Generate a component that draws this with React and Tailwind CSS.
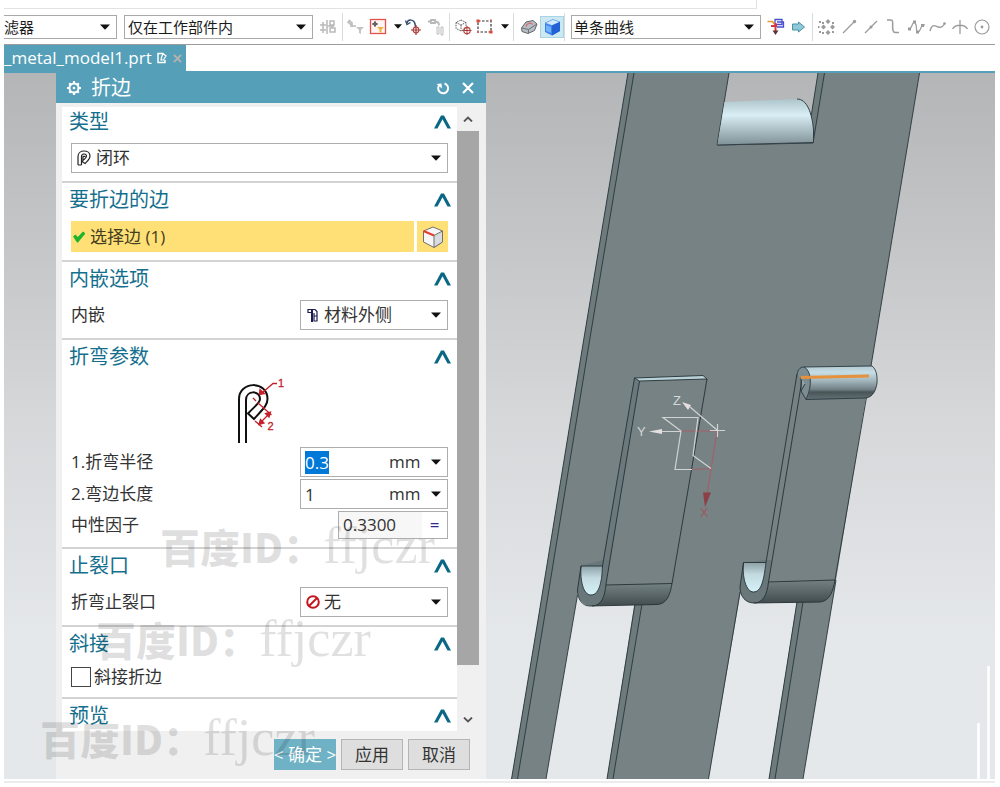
import React from "react";

const Caret = ({ className = "" }) => (
  <svg viewBox="0 0 10 6" className={`pointer-events-none h-[6px] w-[10px] shrink-0 ${className}`} aria-hidden="true">
    <path d="M0 0.5H10L5 5.7Z" fill="#111" />
  </svg>
);

const Separator = () => <span className="h-7 w-px shrink-0 bg-[#d9dbdc]" />;

function ToolButton({ label, wide, active, children }) {
  return (
    <button
      type="button"
      aria-label={label}
      className={`flex h-[22px] shrink-0 items-center justify-center ${wide ? "w-6" : "w-[22px]"} ${
        active ? "border border-[#a8d5e5] bg-[#cde8f1]" : ""
      }`}
    >
      <svg viewBox="0 0 20 20" className="h-5 w-5" fill="none">
        {children}
      </svg>
    </button>
  );
}

const MenuButton = ({ label }) => (
  <button type="button" aria-label={label} className="flex h-[22px] w-[10px] shrink-0 items-center justify-center">
    <svg viewBox="0 0 8 5" className="h-[5px] w-2">
      <path d="M0 .3H8L4 4.700Z" fill="#111" />
    </svg>
  </button>
);

function ToolSelect({ label, value, className, inset }) {
  return (
    <div className={`relative flex h-6 shrink-0 items-center border-[#a9a9a9] bg-white ${className}`}>
      <select
        aria-label={label}
        className={`h-full w-full appearance-none bg-transparent text-[15px] leading-[22px] text-[#1b1b1b] outline-none ${inset}`}
      >
        <option>{value}</option>
      </select>
      <Caret className="absolute right-[6px]" />
    </div>
  );
}

function Toolbar() {
  return (
    <div className="flex h-9 shrink-0 items-center border-b border-[#9c9c9c]">
      <ToolSelect label="过滤器" value="滤器" className="w-[113px] border-y border-r" inset="pl-0" />
      <ToolSelect label="选择范围" value="仅在工作部件内" className="ml-[7px] w-[189px] border" inset="pl-[3px]" />
      <div className="ml-1 mr-[3px] flex">
        <ToolButton label="装配范围">
          <g stroke="#b9b9b9" strokeWidth="1.500">
            <path d="M5 5v11M2 8h6M2 13h6M9 3v14M12 4h4v4h-4zM12 11h5v4h-5zM9 9h7M14 8v3" />
          </g>
        </ToolButton>
      </div>
      <Separator />
      <div className="mx-[2px] flex items-center">
        <ToolButton label="重置过滤器">
          <path d="M6 7.500C3 7.500 3 5 3 4M1.500 6l2-2.500L5.500 5.500M6 5v5M4 9h6" stroke="#bdbdbd" strokeWidth="1.600" />
          <path d="M10 10h8l-3 3v4l-2-1v-3z" fill="#c4c4c4" />
        </ToolButton>
        <ToolButton label="常规选择过滤器">
          <rect x="2.500" y="2.500" width="15" height="14" fill="#fff6f4" stroke="#e0524b" strokeWidth="1.300" />
          <path d="M7 4v6M4 7h6" stroke="#444" />
          <circle cx="7" cy="7" r="1.500" stroke="#444" strokeWidth=".8" />
          <path d="M9 10h7l-2.500 2.500V16l-2-1v-2.500z" fill="#efb23c" />
        </ToolButton>
        <span className="w-1" />
        <MenuButton label="过滤器选项" />
        <ToolButton label="恢复选择">
          <path d="M3 6c1-4 7-4 8 1l.5 3" stroke="#334a6e" strokeWidth="1.500" />
          <path d="M1.500 3.500L3 7.500l3.500-2" stroke="#334a6e" strokeWidth="1.300" />
          <path d="M12 8v10M7 13h10" stroke="#9e3434" strokeWidth="1.200" />
          <circle cx="12" cy="13" r="2.800" stroke="#b84141" strokeWidth="1.200" />
        </ToolButton>
        <ToolButton label="选择链">
          <path d="M2 4.500h3M5 3h4v3H5zM9 4.500c3 0 4 1 4 4" stroke="#b8b8b8" strokeWidth="1.800" />
          <path d="M11 10h2v7h-2zM15 10h2v8h-2z" stroke="#bdbdbd" />
        </ToolButton>
      </div>
      <Separator />
      <div className="mx-[2px] flex items-center">
        <ToolButton label="选择组件">
          <path d="M8 3l5 2.500v6L8 14l-5-2.500v-6zM3 5.500L8 8l5-2.500M8 8v6" stroke="#555" strokeWidth="1" strokeDasharray="1.500 1" />
          <path d="M14 9v9M9.500 13.500h9" stroke="#a73939" />
          <circle cx="14" cy="13.500" r="3.200" stroke="#b84141" strokeWidth="1.200" />
        </ToolButton>
        <ToolButton label="矩形选择">
          <rect x="3" y="4" width="13" height="11" stroke="#333" strokeWidth="1.200" strokeDasharray="2.500 1.500" />
          <path d="M1.500 2.500h3v3h-3zM14.500 13.500h3v3h-3z" fill="#e0453a" />
          <path d="M15 2.500h2v2h-2zM2 14h2v2H2z" fill="#c46a6a" />
        </ToolButton>
        <span className="w-1" />
        <MenuButton label="选择方式" />
        <span className="w-px" />
      </div>
      <Separator />
      <div className="ml-1 flex items-center">
        <ToolButton label="高亮隐藏边">
          <path d="M2.500 11L7 5l7-1.500 4 3.500-2.500 6.500L9 16.500l-6-2z" fill="#b9bdc4" stroke="#60656c" />
          <path d="M3 11l6.500 1.500L18 7M9.500 12.500V16" stroke="#6d7278" />
          <path d="M7 9.500c1-4 5-4 6.500-2" stroke="#d6676a" strokeWidth="1.200" />
        </ToolButton>
        <ToolButton label="着色" wide active>
          <path d="M3 6l8-3.500L18 5v9l-8 4.500L3 15z" fill="#3a82ea" />
          <path d="M3 6l8-3.500L18 5l-8 3.500z" fill="#d3e9fd" stroke="#4c92ee" strokeWidth=".6" />
          <path d="M10 8.500L18 5v9l-8 4.500z" fill="#2360d3" />
          <path d="M4 8l5 2v6l-5-2z" fill="#72b3fa" />
        </ToolButton>
      </div>
      <Separator />
      <ToolSelect label="曲线规则" value="单条曲线" className="ml-[6px] w-[190px] border" inset="pl-[2px]" />
      <div className="ml-1 mr-[3px] flex">
        <ToolButton label="在相交处停止">
          <path d="M9 2.500h7v5H9zM11 5h6.500v5H11" stroke="#4a4fd0" strokeWidth="1.300" />
          <path d="M1.500 4.500h5l3 4" stroke="#ef9b34" strokeWidth="1.700" />
          <path d="M5 9h6M9.500 6v9" stroke="#d6393b" strokeWidth="2" />
          <path d="M6.500 13.500h6L9.500 18z" fill="#5c3538" />
        </ToolButton>
        <ToolButton label="跟随圆角">
          <path d="M4.500 7h6V5l6 5-6 5v-2h-6z" fill="#8dc9d8" stroke="#4b91a5" />
        </ToolButton>
      </div>
      <Separator />
      <div className="ml-[3px] flex min-w-0 flex-1 justify-between pr-0.5 text-[#9b9b9b]">
        <ToolButton label="启用捕捉点">
          <g fill="currentColor">
            <path d="M11 2l2.500 2.500L11 7 8.500 4.500zM6.500 7.500L9 10l-2.500 2.500L4 10zM15.500 7.500L18 10l-2.500 2.500L13 10zM11 13l2.500 2.500L11 18l-2.500-2.500z" />
            <path d="M2 4h2v2H2zM5 5h2v2H5zM15 5h2v2h-2zM2 14h2v2H2zM5 15h2v2H5zM15 14h2v2h-2zM1 9h1.500v2H1z" />
          </g>
        </ToolButton>
        <ToolButton label="端点">
          <path d="M4 16L15 5" stroke="currentColor" strokeWidth="1.200" />
          <circle cx="15.500" cy="4.500" r="1.700" fill="currentColor" />
        </ToolButton>
        <ToolButton label="中点">
          <path d="M4 16L16 4" stroke="currentColor" strokeWidth="1.200" />
          <circle cx="10" cy="10" r="1.500" fill="currentColor" />
        </ToolButton>
        <ToolButton label="控制点">
          <path d="M4 3h4c4 0-1 12 4 12.500h4" stroke="currentColor" strokeWidth="1.500" />
        </ToolButton>
        <ToolButton label="极点">
          <path d="M2 12c4 2 4-9 7-6s0 9 3 9 2-8 7-7" stroke="currentColor" strokeWidth="1.200" />
          <path d="M2 10.500h3v3H2zM7 3.500h3v3H7zM10 13.500h3v3h-3zM15 7h3v3h-3z" fill="currentColor" />
        </ToolButton>
        <ToolButton label="曲线上的点">
          <path d="M2 14c2-8 5-5 8-4s5 0 7-4" stroke="currentColor" strokeWidth="1.400" />
          <circle cx="16.500" cy="6.500" r="1.300" fill="currentColor" />
        </ToolButton>
        <ToolButton label="交点">
          <path d="M10 3v14M2.500 12c3-5 12-5 15 0" stroke="currentColor" strokeWidth="1.300" />
        </ToolButton>
        <ToolButton label="圆心">
          <circle cx="10" cy="10" r="7" stroke="currentColor" strokeWidth="1.200" />
          <circle cx="10" cy="10" r="1.400" fill="currentColor" />
        </ToolButton>
      </div>
    </div>
  );
}

function TabRow() {
  return (
    <div className="flex h-7 shrink-0 border-b-2 border-[#559fb8]">
      <div className="flex w-[182px] items-center bg-[#559fb8] text-white">
        <span className="text-[17px] leading-6">_metal_model1.prt</span>
        <svg viewBox="0 0 12 12" className="ml-1 h-3 w-3" fill="none" aria-hidden="true">
          <path d="M7 1.500H2v9h7V8" stroke="#fff" strokeWidth="1.500" />
          <path d="M7 1.500l3 2.500-2.500 4L5 8l.5-2.500z" stroke="#fff" strokeWidth="1.200" />
        </svg>
        <button type="button" aria-label="关闭标签" className="ml-1 flex h-4 w-3 items-center justify-center">
          <svg viewBox="0 0 10 10" className="h-[9px] w-[9px]" fill="none">
            <path d="M1 1l8 8M9 1L1 9" stroke="#b9b3ae" strokeWidth="2" />
          </svg>
        </button>
      </div>
    </div>
  );
}

function Section({ title, children, className = "pt-[2px] pb-2 border-b-2" }) {
  return (
    <section className={`border-[#d3d3d3] ${className}`}>
      <div className="flex h-[30px] items-center justify-between pl-[7px] pr-[6px]">
        <h2 className="text-[20px] leading-[30px] text-[#146f8e]">{title}</h2>
        <button type="button" aria-label={`折叠 ${title}`} className="flex h-5 w-[17px] items-center justify-center">
          <svg viewBox="0 0 17 14" className="h-[14px] w-[17px]">
            <path d="M0 13.500L7 0.500H10L17 13.500H13.500L8.500 4.200L3.500 13.500Z" fill="#0b6885" />
          </svg>
        </button>
      </div>
      {children}
    </section>
  );
}

function IconSelect({ id, label, value, icon, className, inset }) {
  return (
    <div className={`relative flex h-[30px] items-center border border-[#adadad] bg-white ${className}`}>
      <span className="pointer-events-none absolute left-[5px]">{icon}</span>
      <select
        id={id}
        aria-label={label}
        className={`h-full w-full appearance-none bg-transparent text-[17px] leading-7 text-[#333] outline-none ${inset}`}
      >
        <option>{value}</option>
      </select>
      <Caret className="absolute right-[6px]" />
    </div>
  );
}

const Row = ({ id, label, children }) => (
  <div className="flex items-center justify-between px-[9px]">
    <label htmlFor={id} className="text-[17px] leading-6 text-[#333]">
      {label}
    </label>
    {children}
  </div>
);

function LengthField({ id, value, selected }) {
  return (
    <div className="flex h-[30px] w-[148px] items-center border border-[#adadad] bg-white pl-1 pr-[6px] text-[17px] text-[#333]">
      <div className="min-w-0 flex-1">
        <input
          id={id}
          defaultValue={value}
          className={
            selected
              ? "block h-[23px] w-6 bg-[#0078d7] leading-[23px] text-white outline-none"
              : "block h-[23px] w-16 bg-transparent leading-[23px] outline-none"
          }
        />
      </div>
      <div className="relative flex items-center">
        <select aria-label="单位" className="w-[52px] appearance-none bg-transparent leading-6 outline-none">
          <option>mm</option>
        </select>
        <Caret className="absolute right-0" />
      </div>
    </div>
  );
}

const HemDiagram = () => (
  <svg viewBox="232 374 60 71" className="ml-[170px] mt-[2px] h-[71px] w-[60px]" fill="none" aria-hidden="true">
    <g stroke="#111" strokeWidth="2">
      <path d="M239 443V399C239 381 267.500 380 267.500 399C267.500 405 264 408 254 419L248 413.500C256 405 260 403 260 399C260 390 246 390 246 400V443" />
    </g>
    <g stroke="#c4202b" strokeWidth="1.300">
      <path d="M277 383.500h-4L262 393M253 398l3 3M257.500 402.500l14 12.500M255 421l7 6M270 413l-11 11" />
      <path d="M260 389.500l-.5 5 5-1zM270.500 412l-5 1.500 3.500 3.500zM259 424.500l1.500-5 3.500 3.500z" fill="#c4202b" />
    </g>
    <g className="font-['Liberation_Sans',sans-serif] text-[11px]" fill="#c4202b" stroke="#c4202b" strokeWidth=".3">
      <text x="278" y="387">1</text>
      <text x="267.500" y="430">2</text>
    </g>
  </svg>
);

const ClosedLoopIcon = () => (
  <svg viewBox="0 0 14 16" className="h-4 w-[14px]" fill="none" stroke="#222" strokeWidth="1.200">
    <path d="M1 15V6.500C1 -1 13 -.5 13 6c0 3-2 4.500-5 7.500L5 11.500C8 8.500 9.500 8 9.500 6 9.500 3 4.500 3.500 4.500 6.500V15M1 15h3.500M6 10V7c0-1 2-1 2 0" />
  </svg>
);

const MaterialOutsideIcon = () => (
  <svg viewBox="0 0 14 16" className="h-4 w-[14px]" fill="none" stroke="#1c1c50">
    <path d="M2 2.500h4v3H2z" strokeWidth="1.200" />
    <path d="M6 2v13" strokeWidth="2" />
    <path d="M6 2.500h3l2 2V14H8V6M8 9h3" strokeWidth="1.200" />
  </svg>
);

const NoneIcon = () => (
  <svg viewBox="0 0 14 14" className="h-[14px] w-[14px]" fill="none" stroke="#c4161d" strokeWidth="2">
    <circle cx="7" cy="7" r="5.800" />
    <path d="M3 11L11 3" />
  </svg>
);

function HemDialog() {
  return (
    <form className="flex w-[430px] shrink-0 flex-col bg-[#f0f0f0]" onSubmit={(e) => e.preventDefault()}>
      <header className="flex h-[30px] items-center bg-[#559fb8] pl-2.5 pr-3 text-white">
        <svg viewBox="0 0 16 16" className="h-4 w-4" fill="none" stroke="#fff" aria-hidden="true">
          <circle cx="8" cy="8" r="4.500" strokeWidth="2" />
          <circle cx="8" cy="8" r="1.300" fill="#fff" stroke="none" />
          <path d="M8 1v2.500M8 12.500V15M1 8h2.500M12.500 8H15M3.200 3.200l1.500 1.500M11.300 11.300l1.500 1.500M3.200 12.800l1.500-1.500M11.300 4.700l1.500-1.500" strokeWidth="2.200" />
        </svg>
        <h1 className="ml-[9px] flex-1 text-[20px] leading-[30px]">折边</h1>
        <button type="button" aria-label="重置" className="mr-3 flex h-5 w-[14px] items-center">
          <svg viewBox="0 0 14 14" className="h-[14px] w-[14px]" fill="none" stroke="#fff" strokeWidth="2">
            <path d="M3 4.500A5 5 0 1 0 8.500 2.500" />
            <path d="M.5 3l5-.5.5 5z" fill="#fff" stroke="none" />
          </svg>
        </button>
        <button type="button" aria-label="关闭" className="flex h-5 w-3 items-center">
          <svg viewBox="0 0 12 12" className="h-3 w-3" fill="none" stroke="#fff" strokeWidth="2.200">
            <path d="M1 1l10 10M11 1L1 11" />
          </svg>
        </button>
      </header>

      <div className="flex pl-[6px] pr-[7px] pt-1">
        <div className="min-w-0 flex-1 bg-white">
          <Section title="类型" className="border-b-2 pb-2">
            <div className="mt-[6px] px-[9px]">
              <IconSelect label="类型" value="闭环" icon={<ClosedLoopIcon />} inset="pl-6" className="w-full" />
            </div>
          </Section>

          <Section title="要折边的边">
            <div className="mt-[6px] flex h-[31px] gap-[3px] px-[9px]">
              <button type="button" className="flex flex-1 items-center bg-[#ffe077] pl-[2px] text-[17px] leading-6 text-[#443d22]">
                <svg viewBox="0 0 12 12" className="mr-[5px] h-3 w-3" fill="none" aria-hidden="true">
                  <path d="M0 5.500L2.500 3.500 4.800 6 10 .5 12.500 2.500 5 11.500H4z" fill="#1fb42b" />
                </svg>
                选择边 (1)
              </button>
              <button type="button" aria-label="选择边" className="flex w-[31px] items-center justify-center bg-[#ffe077]">
                <svg viewBox="0 0 22 22" className="h-[22px] w-[22px]" strokeLinejoin="round">
                  <path d="M11 1l9.500 4v11L12 21.500 1.500 16V5z" fill="#f6f6f8" stroke="#73706a" />
                  <path d="M12 9.500l8.500-4.500v11L12 21.500z" fill="#d9dbe2" stroke="#73706a" />
                  <path d="M1.500 5L12 9.500" stroke="#e2402c" strokeWidth="2" />
                </svg>
              </button>
            </div>
          </Section>

          <Section title="内嵌选项">
            <div className="mt-[6px]">
              <Row id="inset" label="内嵌">
                <IconSelect id="inset" value="材料外侧" icon={<MaterialOutsideIcon />} inset="pl-[23px]" className="w-[148px]" />
              </Row>
            </div>
          </Section>

          <Section title="折弯参数">
            <HemDiagram />
            <div className="mt-[2px] flex flex-col gap-[2px]">
              <Row id="radius" label="1.折弯半径">
                <LengthField id="radius" value="0.3" selected />
              </Row>
              <Row id="length" label="2.弯边长度">
                <LengthField id="length" value="1" />
              </Row>
              <Row id="neutral" label="中性因子">
                <div className="flex h-7 w-[110px] border border-[#adadad] text-[17px] text-[#333]">
                  <input
                    id="neutral"
                    readOnly
                    defaultValue="0.3300"
                    className="min-w-0 flex-1 bg-[#f7f7f7] pl-1 leading-6 outline-none"
                  />
                  <button type="button" aria-label="公式" className="flex w-[25px] items-center justify-center bg-white">
                    <span className="leading-6 text-[#322a8c]">=</span>
                  </button>
                </div>
              </Row>
            </div>
          </Section>

          <Section title="止裂口">
            <div className="mt-[6px]">
              <Row id="relief" label="折弯止裂口">
                <IconSelect id="relief" value="无" icon={<NoneIcon />} inset="pl-[23px]" className="w-[148px]" />
              </Row>
            </div>
          </Section>

          <Section title="斜接">
            <div className="mt-[6px] flex items-center gap-[3px] px-[9px]">
              <input id="miter" type="checkbox" className="h-5 w-5 appearance-none border border-[#444] bg-white" />
              <label htmlFor="miter" className="text-[17px] leading-6 text-[#333]">
                斜接折边
              </label>
            </div>
          </Section>

          <Section title="预览" className="h-8 overflow-hidden pt-[2px]" />
        </div>

        <div className="flex w-[22px] flex-col items-center" aria-hidden="true">
          <svg viewBox="0 0 10 6" className="my-[9px] h-[6px] w-[10px]" fill="none" stroke="#555" strokeWidth="1.800">
            <path d="M1 5.500l4-4 4 4" />
          </svg>
          <div className="w-full flex-1 bg-[#a6a6a6]" />
          <div className="flex h-[66px] items-end pb-2">
            <svg viewBox="0 0 10 6" className="h-[6px] w-[10px]" fill="none" stroke="#555" strokeWidth="1.800">
              <path d="M1 .5l4 4 4-4" />
            </svg>
          </div>
        </div>
      </div>

      <footer className="flex justify-end gap-[5px] pb-[9px] pr-4 pt-2 text-[17px] leading-6">
        <button type="submit" className="h-[31px] w-[62px] overflow-hidden whitespace-nowrap bg-[#6fb1c5] text-white">
          <span className="-mx-2">&lt; 确定 &gt;</span>
        </button>
        <button type="button" className="h-[31px] w-[62px] border border-[#b5b5b5] bg-[#dedede] text-[#333]">
          应用
        </button>
        <button type="button" className="h-[31px] w-[62px] border border-[#b5b5b5] bg-[#dedede] text-[#333]">
          取消
        </button>
      </footer>
    </form>
  );
}

function ModelView() {
  return (
    <svg
      viewBox="486 73 509 706"
      preserveAspectRatio="xMinYMin slice"
      className="h-full w-full"
      fill="none"
      role="img"
      aria-label="钣金模型"
    >
      <defs>
        <linearGradient id="roll" x1="0" y1="0" x2="0" y2="1">
          <stop offset="0" stopColor="#aec4cb" />
          <stop offset=".35" stopColor="#d9eff5" />
          <stop offset=".55" stopColor="#bcd0d6" />
          <stop offset="1" stopColor="#7f9196" />
        </linearGradient>
        <linearGradient id="pin" x1="0" y1="0" x2="0" y2="1">
          <stop offset="0" stopColor="#b4cbd2" />
          <stop offset=".2" stopColor="#c5dde4" />
          <stop offset=".45" stopColor="#a0b4ba" />
          <stop offset=".7" stopColor="#718085" />
          <stop offset=".78" stopColor="#495457" />
          <stop offset="1" stopColor="#647276" />
        </linearGradient>
        <linearGradient id="under" x1="0" y1="0" x2="0" y2="1">
          <stop offset="0" stopColor="#748183" />
          <stop offset="1" stopColor="#424c4e" />
        </linearGradient>
        <linearGradient id="inside" x1="0" y1="0" x2="0" y2="1">
          <stop offset="0" stopColor="#8ca0a6" />
          <stop offset=".4" stopColor="#c2d9df" />
          <stop offset="1" stopColor="#d4f3f9" />
        </linearGradient>
      </defs>

      <path
        d="M628 73H729L717 145L813 143L818 73H919.500L871 366L836 580L803 779H769L797 600L741 590L708.500 779H607L635 600L579 586L546 779H511.500L538 620L582 350Z"
        fill="#768284"
      />
      <path d="M628 73L582 350L538 620L511.500 779H517.500L544 620L588 350L634 73ZM635 604L607 779H613L642 604ZM797 602L769 779H775L803 602ZM818 73L811 116L813.500 142L824.500 73Z" fill="#6d7b7d" />
      <g stroke="#29363b" strokeWidth=".9">
        <path d="M628 73L582 350L538 620L511.500 779M634 73L588 350L544 620L517.500 779" />
        <path d="M577.500 595L546 779M635 604L607 779M642 604L613 779M740 592L708.500 779M797 602L769 779M803 602L775 779M836 580L803 779M919.500 73L871 366" />
        <path d="M729 73L717 145L813 143L824.500 73M818 73L811 117" />
      </g>

      <path d="M724.500 102L797 99C807 99 812 113 813.500 130V142.500L717.500 145Z" fill="url(#roll)" />
      <path d="M797 99C807 99 812 113 813.500 130V142.500L717.500 145" stroke="#314047" />

      <path d="M634.500 378L639.500 381L606 585L602 566Z" fill="#6b797c" />
      <path d="M634.500 378L703 375.500L707 379L639.500 381Z" fill="#b9d1d8" />
      <path d="M605 585L672 583.500C670 595 667 604 657 604.500L590 606C600 604 603 598 605 585Z" fill="url(#under)" />
      <path d="M581 565.500L577.500 590C577.500 599 583 606 592 606C601 606 605 597 606 584L610 560L603 560Z" fill="#69777a" />
      <path d="M581 566H602.500C602 579 600 595 591 595C583 595 580 580 581 566Z" fill="url(#inside)" />
      <g stroke="#253136" strokeWidth=".9">
        <path d="M634.500 378L703 375.500L707 379L672 583.500C670 595 667 604 657 604.500L590 606C582 606 577.500 599 577.500 590L581 566H602.500L634.500 378L639.500 381L606 584C605 597 601 606 592 606M639.500 381L707 379M606 585L672 583.500" />
        <path d="M581 566C580 580 583 595 591 595C600 595 602 579 602.500 566" />
      </g>

      <path d="M767 583L835 580C833 591 830 601 820 602L754 603C762 601 766 595 767 583Z" fill="url(#under)" />
      <path d="M743.500 562.500L740 587C740 597 746 603 754 603C763 603 767 595 768.500 582L772 560H766Z" fill="#69777a" />
      <path d="M743.500 562.500H766C764 578 762 592 753.500 592C746 592 742 577 743.500 562.500Z" fill="url(#inside)" />
      <g stroke="#253136" strokeWidth=".9">
        <path d="M866.500 397L835 580C833 591 830 601 820 602L754 603C746 603 740 597 740 587L743.500 562.500H766L797 374M802 380L768.500 582C767 595 763 603 754 603M768 582L835 580" />
        <path d="M743.500 562.500C742 577 746 592 753.500 592C762 592 764 578 766 562.500" />
      </g>

      <path d="M804 367L872 366C876 369 877.500 375 877 383C876 390 873 397 866 398L806 399.500L801 391Z" fill="url(#pin)" />
      <path d="M797 377C797 370 800 367 804 367C808 369 811 375 810.500 383C810 391 809 396 806 399.500L801 391L805 384L801 378Z" fill="#7c8d92" />
      <path d="M797 377C797 370 800 367 804 367L872 366C876 369 877.500 375 877 383C876 390 873 397 866 398L806 399.500L801 391L805 384M804 367C811 370 813 385 806 399.500M801 378V391" stroke="#2a383e" strokeWidth=".9" />
      <path d="M801 377.500L869 376" stroke="#e6923d" strokeWidth="2.800" />

      <g strokeWidth="1.200">
        <path d="M717 430.500L707 495M681 431H717M692 469.500L711 468.500" stroke="#a36069" />
        <path d="M703 492.500H711L705 507Z" fill="#8e3f45" />
        <path d="M652 431.500H681M690 407L717 430M692 469.500H675L681 431L663 417.500H698L693 455.500L711 468.500M710 430.500H725M717.500 424V437" stroke="#d0d3d3" />
        <path d="M649 431.500L662 429V434ZM682 402L691 405L688 410Z" fill="#e5e0e0" />
      </g>
      <g className="font-['Liberation_Sans',sans-serif] text-[13px]">
        <text x="673" y="405" fill="#d5d8d8">Z</text>
        <text x="637" y="436" fill="#d5d8d8">Y</text>
        <text x="700" y="517" fill="#9c5a62">X</text>
      </g>

      <path d="M978.500 723V779M988.500 666V779" stroke="#fff" strokeWidth="2.500" />
    </svg>
  );
}

function Watermark({ className }) {
  return (
    <div className={`pointer-events-none absolute flex items-center whitespace-nowrap text-black/12 ${className}`} aria-hidden="true">
      <span className="font-['Noto_Sans_CJK_SC',sans-serif] text-[40px] font-black leading-[52px]">百度ID：</span>
      <span className="font-['Liberation_Serif',serif] text-[52px] leading-[52px]">ffjczr</span>
    </div>
  );
}

export default function App() {
  return (
    <div className="relative flex min-h-screen flex-col bg-white pl-1 pr-[5px] font-['Open_Sans','Noto_Sans_CJK_SC',sans-serif]">
      <div className="h-[9px] w-[76%] shrink-0 border-b border-r border-[#e2e2e2]" />
      <Toolbar />
      <TabRow />
      <main className="flex bg-linear-to-b from-[#b4b5b7] via-[#d6d8da] via-50% to-[#e5e8ea] to-80%">
        <div className="w-[52px] shrink-0" />
        <HemDialog />
        <div className="min-w-0 flex-1 overflow-hidden">
          <ModelView />
        </div>
      </main>
      <div className="mt-[2px] h-[2px] bg-[#ececec]" />
      <Watermark className="left-[160px] top-[520px]" />
      <Watermark className="left-[96px] top-[613px]" />
      <Watermark className="left-[40px] top-[712px]" />
    </div>
  );
}
